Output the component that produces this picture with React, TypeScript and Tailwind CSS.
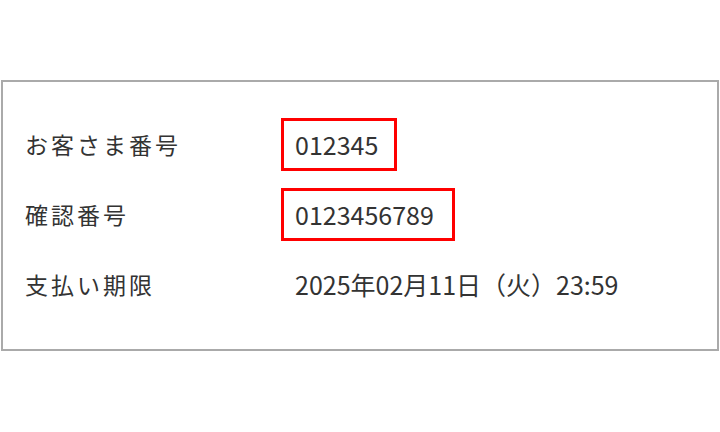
const rows = [
  { label: 'お客さま番号', value: '012345', boxed: true, width: 'w-[116px]' },
  { label: '確認番号', value: '0123456789', boxed: true, width: 'w-[174px]' },
  { label: '支払い期限', value: '2025年02月11日（火）23:59', boxed: false, width: '' },
];

export default function App() {
  return (
    <div
      className="w-[720px] h-[432px] bg-white pt-[80px] text-[#333]"
      style={{ fontFamily: '"Noto Sans CJK JP", "Noto Sans", sans-serif' }}
    >
      {/* info card */}
      <div className="ml-[1px] w-[718px] h-[271px] border-2 border-[#aaa] pt-[36px] pl-[22px] flex flex-col gap-[17px]">
        {rows.map((row) => (
          <div key={row.label} className="flex items-center h-[53px]">
            <div className="w-[256px] text-[23px] tracking-[3px] leading-none">{row.label}</div>
            <div
              className={
                row.boxed
                  ? `${row.width} h-[53px] border-[3px] border-[#f00] pl-[11px] flex items-center text-[25px] leading-none`
                  : 'h-[53px] border-[3px] border-transparent pl-[11px] flex items-center text-[25px] leading-none'
              }
            >
              {row.value}
            </div>
          </div>
        ))}
      </div>
    </div>
  );
}
